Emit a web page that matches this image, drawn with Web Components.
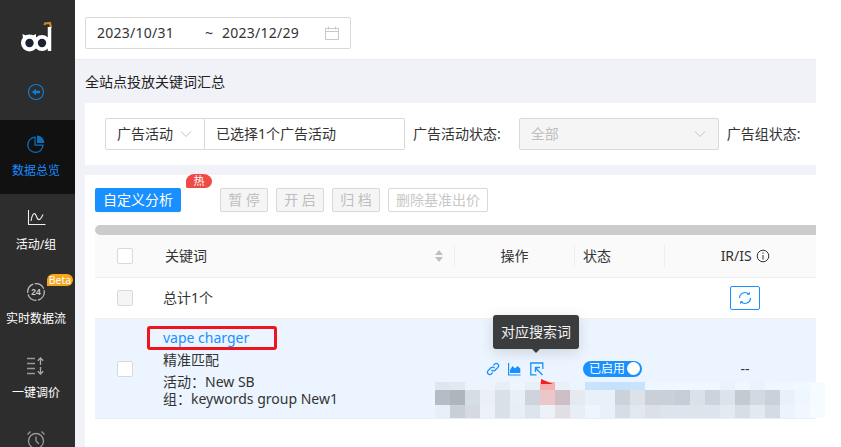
<!DOCTYPE html>
<html lang="zh">
<head>
<meta charset="utf-8">
<title>全站点投放关键词汇总</title>
<style>
  html, body { margin: 0; height: 447px; overflow: hidden; background: #fff; }
  body { position: relative; font: 14px/20px "Noto Sans", "Noto Sans CJK SC", sans-serif; color: #333; }
  .page { display: flex; height: 447px; }
</style>
</head>
<body>
<div class="page">
  <ad-sidebar>
    <ad-nav-item label="数据总览" active>
      <svg width="20" height="20" viewBox="0 0 20 20" fill="none" stroke="#0d6fb5" stroke-width="1.3"><path d="M9 3.2a7.6 7.6 0 1 0 8 8H9z"/><path d="M11 1.6a7.6 7.6 0 0 1 7.4 7.4H11z" fill="#0d6fb5" stroke="none"/></svg>
    </ad-nav-item>
    <ad-nav-item label="活动/组">
      <svg width="20" height="20" viewBox="0 0 20 20" fill="none" stroke="#eee" stroke-width="1.1"><path d="M2.5 2v14.5H19.5"/><path d="M5 13c1.5-9 4-9 5.5-4.5S14 13 17 6.5"/></svg>
    </ad-nav-item>
    <ad-nav-item label="实时数据流" beta>
      <svg width="20" height="20" viewBox="0 0 20 20" fill="none"><circle cx="10" cy="10" r="8.3" stroke="#bbb" stroke-width="1.3" stroke-dasharray="11 1.5"/><text x="10" y="13" text-anchor="middle" font-family="Liberation Sans" font-size="8.5" font-weight="700" fill="#ccc">24</text></svg>
    </ad-nav-item>
    <ad-nav-item label="一键调价">
      <svg width="20" height="20" viewBox="0 0 20 20" fill="none" stroke="#999" stroke-width="1.3"><path d="M1 2.5h8M1 7.5h8M1 12.5h8M1 17.5h8"/><path d="M14.5 9V2M11.8 4.7l2.7-2.7 2.7 2.7M14.5 11v7M11.8 15.3l2.7 2.7 2.7-2.7" stroke="#aaa"/></svg>
    </ad-nav-item>
    <ad-nav-item>
      <svg width="20" height="20" viewBox="0 0 20 20" fill="none" stroke="#999" stroke-width="1.3"><circle cx="10" cy="11" r="7.5"/><path d="M10 6.5V11l3 3M1.5 4.5l3-3M18.5 4.5l-3-3"/></svg>
    </ad-nav-item>
  </ad-sidebar>
  <ad-main>
    <ad-date-range slot="top" start="2023/10/31" end="2023/12/29"></ad-date-range>
    <ad-filter-bar></ad-filter-bar>
    <ad-toolbar></ad-toolbar>
    <ad-keyword-table></ad-keyword-table>
  </ad-main>
</div>
<ad-mosaic></ad-mosaic>

<script>
const CHEVRON = `<svg width="14" height="14" viewBox="0 0 14 14" fill="none" stroke="#c4c4c4" stroke-width="1"><path d="M2 4.5 7 9.5 12 4.5"/></svg>`;

class AdSidebar extends HTMLElement {
  constructor() {
    super();
    this.attachShadow({ mode: "open" });
    this.shadowRoot.innerHTML = `
      <style>
        :host { display: block; flex: 0 0 75px; width: 75px; height: 447px; overflow: hidden; background: #2d2d2d; }
        .head { height: 120px; display: flex; flex-direction: column; align-items: center; box-sizing: border-box; padding: 21px 3px 0 0; gap: 28px; }
        svg { display: block; }
      </style>
      <div class="head">
        <svg width="36" height="34" viewBox="0 0 36 34" fill="none">
          <path d="M26.5 4 L27 2.5 L32 2 L33 7" stroke="#c9862b" stroke-width="2.2"/>
          <path d="M31.5 6 L31.5 30" stroke="#fff" stroke-width="3.5"/>
          <path d="M5 18 L4.5 13 L9 15 H14 L18 13 L18 18Z" fill="#fff"/>
          <circle cx="11.5" cy="22" r="8.5" fill="#fff"/>
          <circle cx="11.5" cy="22" r="4.2" fill="#1c2233"/>
          <circle cx="24" cy="22" r="8" fill="#fff"/>
          <circle cx="24" cy="22" r="4.2" fill="#1c2233"/>
        </svg>
        <svg width="18" height="18" viewBox="0 0 18 18" fill="none">
          <circle cx="9" cy="9" r="7.5" stroke="#0e7fd6" stroke-width="1.1"/>
          <path d="M4.8 9 9 5.8V7.8H13V10.2H9V12.2Z" fill="#0e7fd6"/>
        </svg>
      </div>
      <slot></slot>
    `;
  }
}

class AdNavItem extends HTMLElement {
  constructor() {
    super();
    this.attachShadow({ mode: "open" });
  }

  connectedCallback() {
    const beta = this.hasAttribute("beta") ? `<span class="beta">Beta</span>` : "";
    const label = this.getAttribute("label");
    this.shadowRoot.innerHTML = `
      <style>
        :host { display: block; height: 74px; color: #fff; font-size: 12px; line-height: 16px; }
        :host([active]) { background: #111; color: #1a8cff; }
        .wrap { position: relative; display: flex; flex-direction: column; align-items: center; padding: 14px 3px 0 0; gap: 9px; }
        .icon { height: 20px; }
        .beta { position: absolute; left: 47px; top: 6px; width: 26px; height: 12px; border-radius: 6px 6px 6px 0; background: #f9a61b; font: 10.5px/12px "Noto Sans", sans-serif; text-align: center; }
      </style>
      <div class="wrap">
        <div class="icon"><slot></slot></div>
        ${label ? `<div>${label}</div>` : ""}
        ${beta}
      </div>
    `;
  }
}

class AdMain extends HTMLElement {
  constructor() {
    super();
    this.attachShadow({ mode: "open" });
    this.shadowRoot.innerHTML = `
      <style>
        :host { display: block; flex: 0 0 741px; width: 741px; height: 447px; overflow: hidden; background: #f0f2f8; }
        .top { height: 60px; box-sizing: border-box; padding: 17px 10px 0; background: #fff; border-bottom: 1px solid #e8ebf2; }
        .title { height: 43px; padding-left: 10px; line-height: 43px; color: #222; }
        .body { margin-left: 10px; background: #fff; }
      </style>
      <div class="top"><slot name="top"></slot></div>
      <div class="title">全站点投放关键词汇总</div>
      <div class="body"><slot></slot></div>
    `;
  }
}

class AdDateRange extends HTMLElement {
  constructor() {
    super();
    this.attachShadow({ mode: "open" });
  }

  connectedCallback() {
    this.shadowRoot.innerHTML = `
      <style>
        :host { display: flex; align-items: center; width: 266px; height: 32px; box-sizing: border-box; padding-left: 11px; border: 1px solid #d9d9d9; border-radius: 2px; color: #333; letter-spacing: .25px; }
        .start { width: 108px; }
        .sep { width: 17px; }
        .end { width: 103px; }
        svg { display: block; }
      </style>
      <span class="start">${this.getAttribute("start")}</span>
      <span class="sep">~</span>
      <span class="end">${this.getAttribute("end")}</span>
      <svg width="14" height="14" viewBox="0 0 14 14" fill="none" stroke="#c8c8c8"><path d="M.5 2.5h13v11H.5zM.5 5.5h13M3.5.5v3M10.5.5v3"/></svg>
    `;
  }
}

class AdSelect extends HTMLElement {
  constructor() {
    super();
    this.attachShadow({ mode: "open" });
    this.shadowRoot.innerHTML = `
      <style>
        :host { display: flex; align-items: center; justify-content: space-between; box-sizing: border-box; height: 32px; border: 1px solid #d9d9d9; border-radius: 2px; padding: 0 11px; background: #fff; }
        :host([disabled]) { background: #f5f5f5; color: #bfbfbf; }
        svg { display: block; }
      </style>
      <slot></slot>${CHEVRON}
    `;
  }
}

class AdFilterBar extends HTMLElement {
  constructor() {
    super();
    this.attachShadow({ mode: "open" });
    this.shadowRoot.innerHTML = `
      <style>
        :host { display: flex; align-items: center; height: 62px; padding-left: 20px; white-space: nowrap; border-bottom: 10px solid #f0f2f8; }
        .kind { flex: 0 0 100px; width: 100px; border-radius: 2px 0 0 2px; }
        .picked { flex: 0 0 200px; box-sizing: border-box; height: 32px; line-height: 30px; padding-left: 11px; border: 1px solid #d9d9d9; border-left: 0; border-radius: 0 2px 2px 0; }
        .label { flex: none; margin-left: 8px; color: #333; }
        .state { flex: 0 0 200px; margin-left: 18px; }
      </style>
      <ad-select class="kind">广告活动</ad-select>
      <div class="picked">已选择1个广告活动</div>
      <div class="label">广告活动状态:</div>
      <ad-select class="state" disabled>全部</ad-select>
      <div class="label">广告组状态:</div>
    `;
  }
}

class AdButton extends HTMLElement {
  constructor() {
    super();
    this.attachShadow({ mode: "open" });
    this.shadowRoot.innerHTML = `
      <style>
        :host { display: flex; align-items: center; justify-content: center; box-sizing: border-box; width: 48px; height: 24px; border: 1px solid #d9d9d9; border-radius: 2px; background: #f5f5f5; color: #bdbdbd; }
        :host([primary]) { width: 86px; border: 0; background: #1890ff; color: #fff; box-shadow: 0 2px 0 rgba(0,0,0,.03); }
        :host([plain]) { width: 100px; background: #fff; color: #c8c8c8; }
      </style>
      <slot></slot>
    `;
  }
}

class AdToolbar extends HTMLElement {
  constructor() {
    super();
    this.attachShadow({ mode: "open" });
    this.shadowRoot.innerHTML = `
      <style>
        :host { display: flex; position: relative; padding: 13px 0 13px 10px; gap: 8px; }
        .main { margin-right: 31px; }
        .hot { position: absolute; left: 101px; top: -1px; width: 26px; height: 14px; border-radius: 9px 9px 7px 2px / 8px 8px 7px 2px; background: #f04a45; color: #fff; font-size: 11px; line-height: 14px; text-align: center; }
      </style>
      <ad-button class="main" primary>自定义分析</ad-button>
      <span class="hot">热</span>
      <ad-button>暂 停</ad-button>
      <ad-button>开 启</ad-button>
      <ad-button>归 档</ad-button>
      <ad-button plain>删除基准出价</ad-button>
    `;
  }
}

class AdCheck extends HTMLElement {
  constructor() {
    super();
    this.attachShadow({ mode: "open" });
    this.shadowRoot.innerHTML = `
      <style>
        :host { display: block; width: 16px; height: 16px; box-sizing: border-box; border: 1px solid #d9d9d9; border-radius: 2px; background: #fff; }
        :host([disabled]) { background: #f5f5f5; }
      </style>
    `;
  }
}

class AdSwitch extends HTMLElement {
  constructor() {
    super();
    this.attachShadow({ mode: "open" });
    this.shadowRoot.innerHTML = `
      <style>
        :host { display: flex; align-items: center; justify-content: space-between; box-sizing: border-box; width: 59px; height: 16px; padding: 0 2px 0 6px; border-radius: 8px; background: #1890ff; color: #fff; font-size: 12px; line-height: 16px; }
        i { width: 13px; height: 13px; border-radius: 50%; background: #fff; }
      </style>
      <slot></slot><i></i>
    `;
  }
}

class AdTooltip extends HTMLElement {
  constructor() {
    super();
    this.attachShadow({ mode: "open" });
    this.shadowRoot.innerHTML = `
      <style>
        :host { display: block; position: absolute; left: -37px; bottom: 27px; width: 86px; height: 34px; border-radius: 3px; background: #3a3c3e; color: #f2f2f2; line-height: 34px; text-align: center; white-space: nowrap; box-shadow: 0 3px 14px rgba(0,0,0,.14); }
        :host::after { content: ""; position: absolute; left: 39px; top: 34px; border: 4px solid transparent; border-top-color: #3a3c3e; border-bottom: 0; }
      </style>
      <slot></slot>
    `;
  }
}

class AdKeywordTable extends HTMLElement {
  constructor() {
    super();
    this.attachShadow({ mode: "open" });
    this.shadowRoot.innerHTML = `
      <style>
        :host { display: block; margin-left: 10px; height: 223px; overflow: hidden; }
        .scroll { height: 10px; border-radius: 5px 0 0 5px; background: #ccc; }
        .row { display: grid; grid-template-columns: 60px 299px 120px 90px 162px; width: 731px; align-items: center; }
        .head { height: 42px; background: #fafafa; border-bottom: 1px solid #eee; }
        .total { height: 40px; border-bottom: 1px solid #f0f0f0; }
        .item { height: 99px; background: #ecf5ff; border-bottom: 1px solid #e8eef5; }
        .check { justify-self: center; }
        .name { display: flex; justify-content: space-between; align-items: center; height: 22px; padding: 0 10px; }
        .head > .cell { height: 22px; line-height: 22px; border-left: 1px solid #eee; text-align: center; }
        .head .status { text-align: left; padding-left: 8px; }
        .text { padding-left: 8px; }
        .kw { position: relative; padding-left: 8px; margin-top: -2px; }
        .kw a { display: block; color: #1890ff; line-height: 20px; margin-bottom: 2px; }
        .kw p { margin: 0; line-height: 17px; color: #333; }
        .kw .match { line-height: 20px; margin-bottom: 3px; }
        .mark { position: absolute; left: -8px; top: -2px; width: 130px; height: 24px; box-sizing: border-box; border: 3px solid #f0141e; border-radius: 3px; }
        .ops { display: flex; justify-content: center; gap: 10px; }
        .op { position: relative; width: 12px; height: 14px; }
        .op svg { display: block; }
        .center { display: flex; justify-content: center; }
        .refresh { display: flex; align-items: center; justify-content: center; width: 30px; height: 24px; box-sizing: border-box; border: 1px solid #1890ff; border-radius: 2px; background: #fff; }
        .sw { margin-left: 9px; }
        .info { display: inline-block; vertical-align: -2px; margin-left: 1px; }
      </style>
      <div class="scroll"></div>
      <div class="row head">
        <ad-check class="check"></ad-check>
        <div class="name"><span>关键词</span>
          <svg width="10" height="14" viewBox="0 0 10 14" fill="#bfbfbf"><path d="M5 1 9 6H1zM5 13 1 8H9z"/></svg>
        </div>
        <div class="cell">操作</div>
        <div class="cell status">状态</div>
        <div class="cell">IR/IS <svg class="info" width="14" height="14" viewBox="0 0 14 14" fill="none" stroke="#333"><circle cx="7" cy="7" r="5.8"/><path d="M7 6v4.5M7 3.5v1.3"/></svg></div>
      </div>
      <div class="row total">
        <ad-check class="check" disabled></ad-check>
        <div class="text">总计1个</div>
        <div></div>
        <div></div>
        <div class="center"><span class="refresh">
          <svg width="16" height="16" viewBox="0 0 16 16" fill="none" stroke="#1890ff" stroke-width="1.2"><path d="M2.5 8a5.5 5.5 0 0 1 9.5-3.7M13.5 8A5.5 5.5 0 0 1 4 11.7"/><path d="M12.8 1.8v3h-3zM3.2 14.2v-3h3z" fill="#1890ff" stroke="none"/></svg>
        </span></div>
      </div>
      <div class="row item">
        <ad-check class="check"></ad-check>
        <div class="kw">
          <a>vape charger</a>
          <p class="match">精准匹配</p>
          <p>活动：New SB</p>
          <p>组：keywords group New1</p>
          <span class="mark"></span>
        </div>
        <div class="ops">
          <span class="op"><svg width="14" height="14" viewBox="0 0 14 14" fill="none" stroke="#1890ff" stroke-width="1.3" stroke-linecap="round"><path d="M5.8 8.2a2.3 2.3 0 0 0 3.3 0l2.8-2.8a2.3 2.3 0 0 0-3.3-3.3L7.6 3.1"/><path d="M8.2 5.8a2.3 2.3 0 0 0-3.3 0L2.1 8.6a2.3 2.3 0 0 0 3.3 3.3l1-1"/></svg></span>
          <span class="op"><svg width="13" height="14" viewBox="0 0 13 14" fill="none"><path d="M.6 1v12h12" stroke="#1890ff" stroke-width="1.2"/><path d="M2 11V8l2.5-4 2.5 2.5L9.5 4l2.8 2.5V11z" fill="#1890ff"/></svg></span>
          <span class="op"><svg width="14" height="14" viewBox="0 0 14 14" fill="none" stroke="#1890ff" stroke-width="1.3"><path d="M6.5 12.8H.8V1h12v6"/><path d="M12.5 13 6 6.500M5.500 10V5.500H10" stroke-width="1.4"/></svg><ad-tooltip>对应搜索词</ad-tooltip></span>
        </div>
        <div><ad-switch class="sw">已启用</ad-switch></div>
        <div class="center">--</div>
      </div>
    `;
  }
}

// the blurred-out strip: one colour per 15px block, three rows
const MOSAIC = [
  ["e0e6ee","e3e9f0","eef4fb","eef4fb","e8eef6","eff5fc","e9eff7","f6b0b0","e8f0f8","eef4fb","c8e4fc","c4e2fc","c4e2fc","c8e4fc","eef6ff","f0f7ff","f0f7ff","f0f7ff","f0f7ff","eaf2fb","f0f7ff","eaf3fc","eef6ff","f0f7ff","f2f8ff"],
  ["b5bcc4","aeb5bc","d5dde5","eaf0f6","d9e0e8","e9eff6","cdd4dc","ebc6ca","cdbfc5","e5e9f0","e8f0fa","e8f0fa","ccd2da","dce2e8","c9d0d8","c9d0d8","c6cdd6","dae1e8","ccd3dc","dde3ea","c3cad2","d3d9e1","cbd1da","e8f0f8","eef6ff"],
  ["e9eff6","c9cfd6","d6d9e2","edf2f9","d9e0e8","e8eef5","dde4ec","ecf1f8","e2dfe4","e8eef6","eef5fd","e8f0f9","d6dee5","e2e8f0","dae1e8","dde4ec","dde4ec","dde4ec","dde4ec","e4eaf1","d7dee5","e3e9f0","d5dbe3","edf3fb","f0f7ff"]
];

class AdMosaic extends HTMLElement {
  constructor() {
    super();
    this.attachShadow({ mode: "open" });
    const cells = MOSAIC.flat().map((c) => `<i style="background:#${c}"></i>`).join("");
    this.shadowRoot.innerHTML = `
      <style>
        :host { display: block; position: absolute; left: 435px; top: 382px; }
        .grid { display: grid; grid-template-columns: repeat(25, 15px) 15px; grid-template-rows: 8px 15px 13px; }
        .edge { grid-column: 26; grid-row: 1 / 4; background: #f6fbff; }
        .arrow { position: absolute; left: 106px; top: -3px; width: 0; height: 0; border-left: 12px solid transparent; border-bottom: 5px solid #f0221c; transform: scaleX(-1); }
      </style>
      <div class="grid">${cells}<i class="edge"></i></div>
      <div class="arrow"></div>
    `;
  }
}

customElements.define("ad-sidebar", AdSidebar);
customElements.define("ad-nav-item", AdNavItem);
customElements.define("ad-main", AdMain);
customElements.define("ad-date-range", AdDateRange);
customElements.define("ad-select", AdSelect);
customElements.define("ad-filter-bar", AdFilterBar);
customElements.define("ad-button", AdButton);
customElements.define("ad-toolbar", AdToolbar);
customElements.define("ad-check", AdCheck);
customElements.define("ad-switch", AdSwitch);
customElements.define("ad-tooltip", AdTooltip);
customElements.define("ad-keyword-table", AdKeywordTable);
customElements.define("ad-mosaic", AdMosaic);
</script>
</body>
</html>
